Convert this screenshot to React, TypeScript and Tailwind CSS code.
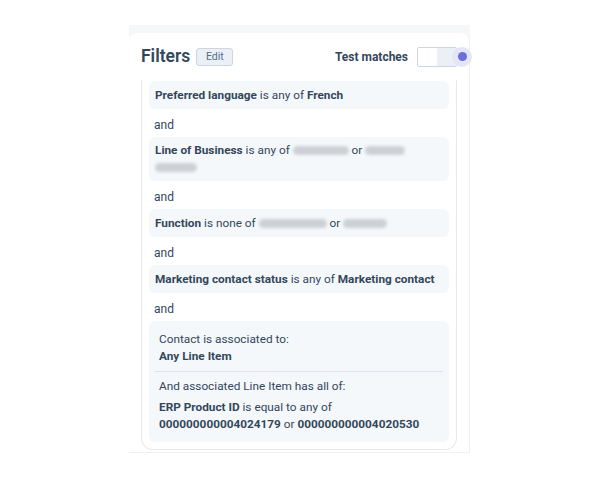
import React from "react";

const font = { fontFamily: "Roboto, 'Noto Sans', sans-serif" };

function And() {
  return <div className="px-[5px] pt-[8px] pb-[3px] leading-[17px] text-[12px] text-[#33475b]">and</div>;
}

function Blur({ w }: { w: number }) {
  return (
    <span
      className="inline-block align-middle h-[9px] rounded-full bg-[#cdd1d6] blur-[1.5px]"
      style={{ width: w }}
    />
  );
}

export default function App() {
  return (
    <div className="w-[600px] h-[480px] bg-white pt-[25px] pl-[129px]" style={font}>
      <div className="w-[341px] h-[428px] flex flex-col bg-[#f5f7f9]">
        <div className="h-[8px] shrink-0" />
        <div className="flex-1 flex flex-col bg-white rounded-t-[8px] border-r border-b border-[#eef0f3]">
          <div className="h-[47px] shrink-0 flex items-center pl-[12px] pr-[12px]">
            <span className="text-[17.5px] font-semibold text-[#33475b] leading-none">Filters</span>
            <span className="ml-[6px] h-[18px] w-[37px] flex items-center justify-center rounded-[3px] bg-[#eaf0f6] border border-[#cbd6e2] text-[10.5px] text-[#506e91]">
              Edit
            </span>
            <span className="ml-auto text-[12px] font-bold text-[#33475b]">Test matches</span>
            <div className="relative ml-[9px] h-[20px] w-[40px] flex border border-[#cbd6e2] rounded-[2px] overflow-visible">
              <div className="w-[19px] bg-white" />
              <div className="flex-1 bg-[#eaf0f6]" />
              <div className="absolute right-[-16px] top-[-1px] w-[20px] h-[20px] rounded-full bg-[#e3e6f7] flex items-center justify-center">
                <div className="w-[9px] h-[9px] rounded-full bg-[#6a6fdb]" />
              </div>
            </div>
          </div>
          <div className="mx-[12px] flex-1 border-l border-r border-b border-[#e5e8ed] rounded-b-[12px] px-[7px] pt-[1px] text-[11.8px] text-[#33475b]">
            <div className="bg-[#f5f8fa] rounded-[6px] px-[6px] py-[5.5px] leading-[17px]">
              <b className="font-bold">Preferred language</b> is any of <b className="font-bold">French</b>
            </div>
            <And />
            <div className="bg-[#f5f8fa] rounded-[6px] px-[6px] py-[5px] leading-[17px]">
              <b className="font-bold">Line of Business</b> is any of <Blur w={56} /> or <Blur w={40} />
              <br />
              <Blur w={42} />
            </div>
            <And />
            <div className="bg-[#f5f8fa] rounded-[6px] px-[6px] py-[5.5px] leading-[17px]">
              <b className="font-bold">Function</b> is none of <Blur w={68} /> or <Blur w={44} />
            </div>
            <And />
            <div className="bg-[#f5f8fa] rounded-[6px] px-[6px] py-[5.5px] leading-[17px] whitespace-nowrap">
              <b className="font-bold">Marketing contact status</b> is any of <b className="font-bold">Marketing contact</b>
            </div>
            <And />
            <div className="bg-[#f5f8fa] rounded-[6px] px-[6px] pt-[10px] pb-[9px] leading-[17px]">
              <div className="px-[4px]">Contact is associated to:</div>
              <div className="px-[4px] font-bold">Any Line Item</div>
              <div className="h-px bg-[#dfe3eb] mt-[6px] mb-[6px]" />
              <div className="px-[4px]">And associated Line Item has all of:</div>
              <div className="px-[4px] mt-[4px]">
                <b className="font-bold">ERP Product ID</b> is equal to any of
              </div>
              <div className="px-[4px] whitespace-nowrap">
                <b className="font-bold">000000000004024179</b> or <b className="font-bold">000000000004020530</b>
              </div>
            </div>
          </div>
          <div className="h-[2px] shrink-0" />
        </div>
      </div>
    </div>
  );
}
